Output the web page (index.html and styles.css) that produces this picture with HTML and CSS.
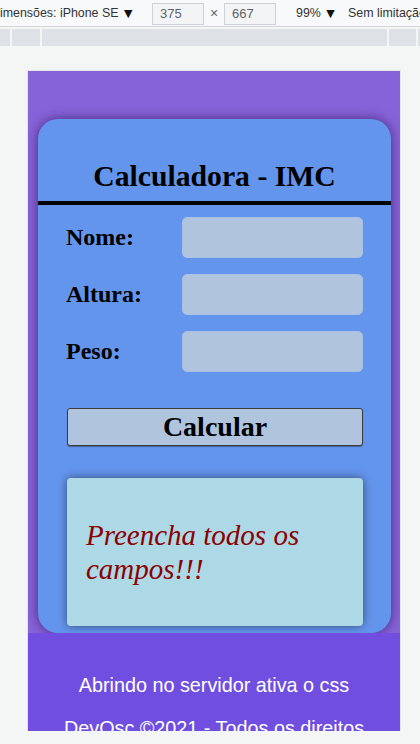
FILE: index.html
```html
<!DOCTYPE html>
<html lang="pt-BR">
<head>
    <meta charset="UTF-8">
    <meta name="viewport" content="width=device-width, initial-scale=1.0">
    <title>Calculadora - IMC</title>
    <link rel="stylesheet" href="styles.css">
</head>
<body>

<div class="devtools-bar">
    <span class="device">imensões: iPhone SE <span class="caret">▼</span></span>
    <span class="dim-box">375</span>
    <span class="times">×</span>
    <span class="dim-box">667</span>
    <span class="zoom">99% <span class="caret">▼</span></span>
    <span class="throttle">Sem limitação</span>
</div>

<div class="ruler">
    <span class="seg seg-a"></span>
    <span class="seg seg-b"></span>
    <span class="seg seg-c"></span>
    <span class="seg seg-d"></span>
    <span class="seg seg-e"></span>
</div>

<div class="stage">
    <div class="viewport">
        <main class="card">
            <div class="card-header">
                <h1>Calculadora - IMC</h1>
            </div>
            <form class="form" id="imcForm">
                <div class="row">
                    <label for="nome">Nome:</label>
                    <input type="text" id="nome">
                </div>
                <div class="row">
                    <label for="altura">Altura:</label>
                    <input type="text" id="altura">
                </div>
                <div class="row">
                    <label for="peso">Peso:</label>
                    <input type="text" id="peso">
                </div>
                <button type="button" class="btn" onclick="calcular()">Calcular</button>
                <div class="result">
                    <p id="resultado">Preencha todos os campos!!!</p>
                </div>
            </form>
        </main>
        <footer class="footer">
            <p>Abrindo no servidor ativa o css</p>
            <p>DevOsc ©2021 - Todos os direitos reservados.</p>
        </footer>
    </div>
</div>

<script>
    function calcular() {
        const nome = document.getElementById('nome').value;
        const altura = parseFloat(document.getElementById('altura').value);
        const peso = parseFloat(document.getElementById('peso').value);
        const resultado = document.getElementById('resultado');

        if (!nome || isNaN(altura) || isNaN(peso)) {
            resultado.textContent = 'Preencha todos os campos!!!';
            return;
        }

        const imc = (peso / (altura * altura)).toFixed(1);
        resultado.textContent = `${nome}, seu IMC é ${imc}`;
    }
</script>

</body>
</html>
```

FILE: styles.css
```css
body {
    margin: 0;
    padding: 0;
    background-color: #f4f5f5;
    overflow: hidden;
}

/* barra do modo dispositivo */
.devtools-bar {
    display: flex;
    align-items: center;
    height: 26px;
    background-color: #f8f9fa;
    border-bottom: 1px solid #d3d5d8;
    font-family: 'Liberation Sans', Arial, sans-serif;
    font-size: 12.4px;
    color: #333;
    white-space: nowrap;
    overflow: hidden;
}
.device {
    width: 152px;
    flex-shrink: 0;
}
.caret {
    font-family: 'DejaVu Sans', sans-serif;
    font-size: 11px;
    color: #111;
    margin-left: 2px;
}
.dim-box {
    box-sizing: border-box;
    width: 52px;
    height: 22px;
    margin-top: 1px;
    padding-left: 7px;
    line-height: 20px;
    border: 1px solid #cfd2d6;
    background-color: #f3f4f5;
    color: #5f6368;
    font-size: 13px;
    flex-shrink: 0;
}
.times {
    width: 20px;
    text-align: center;
    color: #5f6368;
    font-size: 14px;
    flex-shrink: 0;
}
.zoom {
    width: 52px;
    margin-left: 20px;
    flex-shrink: 0;
}
.throttle {
    flex-shrink: 0;
}

.ruler {
    display: flex;
    gap: 2px;
    height: 17px;
    margin-top: 2px;
}
.seg {
    background-color: #dee1e6;
}
.seg-a { width: 10px; }
.seg-b { width: 28px; }
.seg-c { width: 345px; }
.seg-d { width: 27px; }
.seg-e { flex: 1; }

.stage {
    padding: 25px 0 0 28px;
}
.viewport {
    width: 372px;
    height: 660px;
    overflow: hidden;
    background-color: #8763d9;
    box-shadow: 0 0 0 1px #e3e4e5;
}

/* pagina */
.card {
    display: block;
    margin: 48px 9px 0 10px;
    padding-bottom: 7px;
    background-color: #6495ed;
    border-radius: 20px;
    box-shadow: 0 0 12px rgba(40, 20, 90, 0.7);
}
.card-header {
    padding: 40px 0 8px;
    border-bottom: 4px solid #000;
}
h1 {
    margin: 0;
    font-family: 'Liberation Serif', 'Times New Roman', serif;
    font-size: 29.7px;
    line-height: 34px;
    font-weight: bold;
    text-align: center;
    color: #000;
}
.form {
    padding: 12px 28px 0;
}
.row {
    display: flex;
    align-items: center;
    height: 41px;
}
.row + .row {
    margin-top: 16px;
}
label {
    width: 116px;
    flex-shrink: 0;
    font-family: 'Liberation Serif', 'Times New Roman', serif;
    font-size: 24px;
    font-weight: bold;
    color: #000;
}
input {
    flex: 1;
    min-width: 0;
    height: 41px;
    box-sizing: border-box;
    border: 1px solid #a9bfe6;
    border-radius: 5px;
    background-color: #b0c4de;
    font-size: 18px;
}
.btn {
    display: block;
    box-sizing: border-box;
    width: calc(100% - 1px);
    height: 38px;
    margin: 36px 0 0 1px;
    padding: 0;
    background-color: #b0c4de;
    border: 1px solid #3c3c3c;
    border-radius: 3px;
    box-shadow: 0 1px 1px rgba(0, 0, 0, 0.35);
    font-family: 'Liberation Serif', 'Times New Roman', serif;
    font-size: 28px;
    font-weight: bold;
    color: #000;
    cursor: pointer;
}
.result {
    display: flex;
    align-items: center;
    box-sizing: border-box;
    width: calc(100% - 1px);
    height: 148px;
    margin: 32px 0 0 1px;
    padding: 0 18px 0 19px;
    background-color: #add8e6;
    border-radius: 4px;
    box-shadow: 0 0 10px rgba(0, 0, 0, 0.5);
}
.result p {
    margin: 0;
    font-family: 'Liberation Serif', 'Times New Roman', serif;
    font-style: italic;
    font-size: 29px;
    line-height: 34px;
    color: #8b0000;
}

.footer {
    padding-top: 21px;
    background-color: #704fe0;
    text-align: center;
    color: #fff;
    font-family: 'Liberation Sans', Arial, sans-serif;
    font-size: 19.8px;
}
.footer p {
    margin: 19.8px 0;
}
```
